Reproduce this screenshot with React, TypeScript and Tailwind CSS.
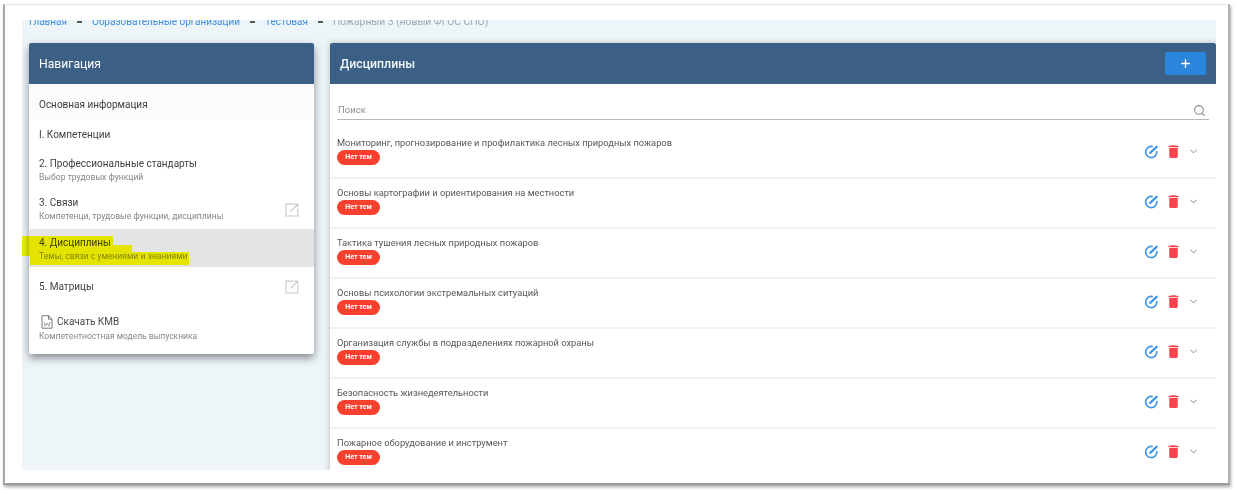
import { ChevronDown, Plus, Search } from 'lucide-react';
import { MdDelete } from 'react-icons/md';

const disciplines = [
  'Мониторинг, прогнозирование и профилактика лесных природных пожаров',
  'Основы картографии и ориентирования на местности',
  'Тактика тушения лесных природных пожаров',
  'Основы психологии экстремальных ситуаций',
  'Организация службы в подразделениях пожарной охраны',
  'Безопасность жизнедеятельности',
  'Пожарное оборудование и инструмент',
];

function LinkIcon() {
  return (
    <svg width="14" height="14" viewBox="0 0 14 14" fill="none" stroke="#c8cacc" strokeWidth="1.200">
      <path d="M8.500 1.200H1v11.800h11.800V5.500" />
      <path d="M5.500 8.500 12 2M9.500 1.200h3.300v3.300" />
    </svg>
  );
}

function EditIcon() {
  return (
    <svg width="14" height="14" viewBox="0 0 14 14" fill="none" stroke="#3f97e8" strokeWidth="1.700" strokeLinecap="round">
      <path d="M8.200 1.500A5.600 5.600 0 1 0 12.800 6.600" />
      <path d="M6.200 7.800 12.600 1.800" strokeWidth="2.300" />
    </svg>
  );
}

function DocIcon() {
  return (
    <svg width="12" height="14" viewBox="0 0 12 14" fill="none" stroke="#77797b" strokeWidth="1">
      <path d="M1 .7h6.500L11 4.200v9H1zM7.500 .7v3.500H11" />
      <path d="M3 7l1.200 4.200L6 8l1.800 3.200L9 7" stroke="#9a9c9e" />
    </svg>
  );
}

function NavRow({ title, sub, link, active, className }: { title: string; sub?: string; link?: boolean; active?: boolean; className: string }) {
  return (
    <div className={`flex items-center justify-between pl-[10px] pr-[15px] ${active ? 'bg-[#e4e4e4]' : ''} ${className}`}>
      <div>
        <div className="text-[10px] leading-[14px] text-[#3f4145]">{title}</div>
        {sub && <div className="text-[8.600px] leading-[13px] text-[#85878a]">{sub}</div>}
      </div>
      {link && <LinkIcon />}
    </div>
  );
}

export default function App() {
  return (
    <div className="h-[490px] w-[1236px] overflow-hidden bg-white pb-[5px] pl-[3px] pr-[6px] pt-1 font-['Roboto',sans-serif] blur-[0.5px]">
      <div className="h-[481px] border-l-2 border-r-2 border-b-2 border-t border-b-[#9b9b9b] border-l-[#a8a8a8] border-r-[#b0b0b0] border-t-[#e4e4e4] bg-white pl-[17px] pr-[12px] pt-[15px] shadow-[1px_2px_3px_rgba(0,0,0,0.35)]">
        <div className="relative h-[450px] overflow-hidden bg-[#eef5f9] pl-[7px]">
          <div className="-mt-[6px] flex h-[16px] items-center gap-[10px] text-[10px] leading-[16px] text-[#a3a8ac]">
            <span className="text-[#3f8fe0]">Главная</span>
            <span className="h-[2px] w-[5px] bg-[#555]" />
            <span className="text-[#3f8fe0]">Образовательные организации</span>
            <span className="h-[2px] w-[5px] bg-[#555]" />
            <span className="text-[#3f8fe0]">Тестовая</span>
            <span className="h-[2px] w-[5px] bg-[#555]" />
            <span className="text-[10.300px]">Пожарный 3 (новый ФГОС СПО)</span>
          </div>

          <div className="mt-[13px] flex items-start gap-[16px]">
            <div className="h-[311px] w-[285px] shrink-0 rounded-[2px] bg-white shadow-[0_4px_9px_rgba(40,50,60,0.55)]">
              <div className="flex h-[41px] items-center rounded-t-[2px] bg-[#3b5f85] pl-[10px] pt-[1px] text-[12.200px] text-white">Навигация</div>
              <div className="flex h-[36px] items-center bg-[#fdfcfb] pl-[10px] pt-[4px] text-[10px] text-[#3f4145]">Основная информация</div>
              <NavRow title="I. Компетенции" className="h-[27px] pt-[2px]" />
              <NavRow title="2. Профессиональные стандарты" sub="Выбор трудовых функций" className="h-[39px] pt-[7px]" />
              <NavRow title="3. Связи" sub="Компетенци, трудовые функции, дисциплины" link className="h-[43px] pt-[4px]" />
              <NavRow title="4. Дисциплины" sub="Темы, связи с умениями и знаниями" active className="h-[38px] pt-[3px]" />
              <NavRow title="5. Матрицы" link className="h-[38px] pt-[2px]" />
              <div className="pl-[10px] pt-[9px]">
                <div className="flex items-center gap-[4px] pl-[2px] text-[10px] leading-[16px] text-[#45474b]">
                  <DocIcon />
                  Скачать КМВ
                </div>
                <div className="-mt-[1px] text-[8.500px] leading-[14px] text-[#85878a]">Компетентностная модель выпускника</div>
              </div>
            </div>

            <div className="min-w-0 flex-1 bg-white shadow-[0_0_6px_rgba(40,50,60,0.3)]">
              <div className="flex h-[41px] items-center justify-between rounded-t-[2px] bg-[#3b5f85] pl-[10px] pr-[10px] text-[12.300px] font-medium text-[#f2f5f8]">
                <span className="pt-[1px]">Дисциплины</span>
                <div className="flex h-[23px] w-[41px] items-center justify-center rounded-[2px] bg-[#2a85dc]">
                  <Plus size={13} strokeWidth={2.500} color="#fff" />
                </div>
              </div>
              <div className="ml-[7px] mr-[7px] mt-[14px] flex h-[22px] items-center justify-between border-b border-b-[#b9b9b9] pr-[3px] pt-[3px] text-[9.500px] text-[#8a8c8e]">
                <span className="pl-[1px]">Поиск</span>
                <Search size={13} color="#8a8a8a" />
              </div>
              <div className="mt-[9px]">
                {disciplines.map((name, i) => (
                  <div key={i} className="flex h-[50px] items-start justify-between border-b-2 border-b-[#f0f0f0] pl-[7px] pr-[17px]">
                    <div className="pt-[8px]">
                      <div className="text-[9.300px] leading-[12px] text-[#55575a]">{name}</div>
                      <div className="mt-[1px] flex h-[15px] w-[43px] items-center justify-center rounded-full bg-[#f8402f] text-[7px] font-bold text-white">Нет тем</div>
                    </div>
                    <div className="mt-[14px] flex items-center gap-[7px]">
                      <EditIcon />
                      <MdDelete size={17} color="#f6434c" />
                      <ChevronDown size={11} strokeWidth={2} color="#808080" className="-ml-[1px]" />
                    </div>
                  </div>
                ))}
              </div>
            </div>
          </div>

          {/* жёлтый маркер поверх пункта 4 */}
          <div className="pointer-events-none absolute left-0 top-[216px] h-[20px] w-[91px] bg-[#ffff00] mix-blend-multiply" />
          <div className="pointer-events-none absolute left-[8px] top-[225px] h-[20px] w-[102px] bg-[#ffff00] mix-blend-multiply" />
          <div className="pointer-events-none absolute left-[8px] top-[232px] h-[13px] w-[159px] bg-[#ffff00] mix-blend-multiply" />
        </div>
      </div>
    </div>
  );
}
